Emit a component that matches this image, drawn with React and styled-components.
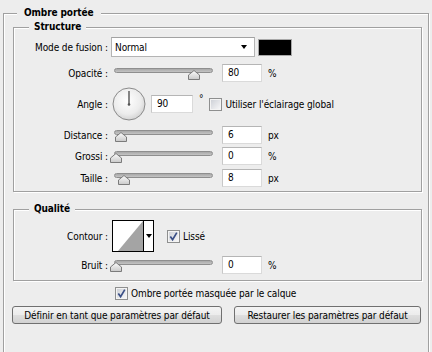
import React from "react";
import styled, { createGlobalStyle } from "styled-components";

const Global = createGlobalStyle`
  html, body {
    margin: 0;
    background: #ededed;
  }
  body {
    font-family: "DejaVu Sans Condensed", "DejaVu Sans", sans-serif;
    font-stretch: condensed;
    font-size: 10px;
    letter-spacing: -0.1px;
    color: #000;
    overflow: hidden;
  }
`;

const Outer = styled.fieldset`
  margin: 6px 3px 0;
  padding: 0 6px 0 9px;
  border: 1px solid #a0a0a0;
  box-shadow: inset 1px 1px 0 #fff, 1px 1px 0 #fff;
  min-height: 370px;
  box-sizing: border-box;
`;

const Legend = styled.legend`
  margin-left: ${(p) => p.$offset}px;
  padding: 0 ${(p) => p.$pad}px;
  height: 14px;
  line-height: 14px;
  font-weight: bold;
  background: #ededed;
`;

const Group = styled.fieldset`
  margin: ${(p) => p.$top || 0}px 0 0;
  padding: ${(p) => p.$padTop}px 0 ${(p) => p.$padBottom}px;
  border: 1px solid #a0a0a0;
  box-shadow: inset 1px 1px 0 #fff, 1px 1px 0 #fff;
`;

const Row = styled.div`
  display: flex;
  align-items: center;
  height: ${(p) => p.$h}px;
  margin-top: ${(p) => p.$mt || 0}px;
`;

const Label = styled.div`
  width: 94px;
  margin-right: 3px;
  text-align: right;
  white-space: nowrap;
`;

const Select = styled.div`
  width: 144px;
  height: 20px;
  box-sizing: border-box;
  border: 1px solid #b4b4b4;
  border-top-color: #a2a2a2;
  background: #fff;
  display: flex;
  align-items: center;
  padding-left: 3px;
`;

const Arrow = styled.span`
  width: 0;
  height: 0;
  border-left: 3px solid transparent;
  border-right: 3px solid transparent;
  border-top: 4px solid #000;
  margin-left: ${(p) => p.$ml || 0}px;
`;

const Swatch = styled.div`
  width: 34px;
  height: 17px;
  margin-left: 3px;
  box-sizing: border-box;
  border: 1px solid #a8a8a8;
  background: #000;
`;

const SliderBox = styled.div`
  position: relative;
  width: 106px;
  height: 20px;
  flex: none;
`;

const Track = styled.div`
  position: absolute;
  left: 3px;
  right: 4px;
  top: 5px;
  height: 5px;
  box-sizing: border-box;
  border: 1px solid #8e8e8e;
  border-radius: 3px;
  background: linear-gradient(#a8a8a8, #c4c4c4);
`;

const Thumb = styled.svg`
  position: absolute;
  top: 7px;
`;

const NumInput = styled.div`
  width: ${(p) => p.$w || 40}px;
  height: 18px;
  margin-left: ${(p) => p.$ml || 5}px;
  box-sizing: border-box;
  border: 1px solid #dadada;
  border-top-color: #b5b5b5;
  border-left-color: #c8c8c8;
  background: #fff;
  padding-left: 5px;
  line-height: 16px;
`;

const Unit = styled.span`
  margin-left: 6px;
`;

const DegreeSign = styled.span`
  margin-left: 6px;
  align-self: flex-start;
  margin-top: 5px;
`;

const CheckLabel = styled.label`
  display: flex;
  align-items: center;
  gap: 3px;
  margin-left: ${(p) => p.$ml || 0}px;
  white-space: nowrap;
`;

const ContourBox = styled.div`
  display: flex;
  width: 42px;
  height: 32px;
  margin-left: 1px;
  box-sizing: border-box;
  border: 1px solid #000;
  background: #fff;
`;

const ContourDrop = styled.div`
  flex: 1;
  display: flex;
  align-items: center;
  justify-content: center;
  border-left: 1px solid #000;
`;

const MaskRow = styled.div`
  margin-top: 6px;
  padding-left: 102px;
  height: 13px;
  display: flex;
  align-items: center;
`;

const Buttons = styled.div`
  display: flex;
  gap: 12px;
  margin: 6px 0 0 -1px;
`;

const Button = styled.button`
  width: ${(p) => p.$w}px;
  height: 18px;
  padding: 0;
  border: 1px solid #707070;
  border-radius: 3px;
  background: linear-gradient(#f4f4f4 0%, #ececec 48%, #dedede 52%, #d2d2d2 100%);
  font: inherit;
  letter-spacing: inherit;
  color: #000;
  white-space: nowrap;
`;

const Check = ({ checked }) => (
  <svg width="13" height="13" viewBox="0 0 13 13">
    <defs>
      <linearGradient id="cbg" x1="0" y1="0" x2="1" y2="1">
        <stop offset="0" stopColor="#cfd2d8" />
        <stop offset="1" stopColor="#f6f6f7" />
      </linearGradient>
    </defs>
    <rect x="0.5" y="0.5" width="12" height="12" fill="#f4f4f4" stroke="#8e8f8f" />
    <rect x="2" y="2" width="9" height="9" fill="url(#cbg)" />
    {checked && (
      <path
        d="M3.3 6.4 L5.6 9.6 L9.8 2.6"
        fill="none"
        stroke="#3a4f86"
        strokeWidth="1.7"
      />
    )}
  </svg>
);

const Slider = ({ at }) => (
  <SliderBox>
    <Track />
    <Thumb width="12" height="10" viewBox="0 0 12 10" style={{ left: at - 6 }}>
      <defs>
        <linearGradient id="thg" x1="0" y1="0" x2="0" y2="1">
          <stop offset="0" stopColor="#fdfdfd" />
          <stop offset="1" stopColor="#c9c9c9" />
        </linearGradient>
      </defs>
      <polygon
        points="0.5,9.5 0.5,5 6,0.5 11.5,5 11.5,9.5"
        fill="url(#thg)"
        stroke="#7b7b7b"
      />
    </Thumb>
  </SliderBox>
);

const Dial = () => (
  <svg width="34" height="34" viewBox="0 0 34 34" style={{ marginLeft: 1 }}>
    <defs>
      <radialGradient id="dg" cx="0.45" cy="0.4" r="0.6">
        <stop offset="0" stopColor="#ffffff" />
        <stop offset="0.7" stopColor="#ececec" />
        <stop offset="1" stopColor="#d4d4d4" />
      </radialGradient>
    </defs>
    <circle cx="17" cy="17" r="16" fill="url(#dg)" stroke="#8a8a8a" />
    <line x1="17" y1="17.5" x2="17" y2="4" stroke="#555" strokeWidth="1.4" />
    <circle cx="17" cy="17.5" r="1.3" fill="#555" />
  </svg>
);

const SliderRow = ({ label, at, value, unit, h = 20, mt }) => (
  <Row $h={h} $mt={mt}>
    <Label>{label}</Label>
    <Slider at={at} />
    <NumInput>{value}</NumInput>
    <Unit>{unit}</Unit>
  </Row>
);

export default function App() {
  return (
    <>
      <Global />
      <Outer>
        <Legend $offset={4} $pad={7}>Ombre portée</Legend>

        <Group $padTop={3} $padBottom={3}>
          <Legend $offset={15} $pad={5}>Structure</Legend>
          <Row $h={20}>
            <Label>Mode de fusion :</Label>
            <Select>
              Normal
              <Arrow $ml={94} />
            </Select>
            <Swatch />
          </Row>
          <SliderRow label="Opacité :" at={83} value="80" unit="%" mt={6} />
          <Row $h={32} $mt={5}>
            <Label>Angle :</Label>
            <Dial />
            <NumInput $w={42}>90</NumInput>
            <DegreeSign>°</DegreeSign>
            <CheckLabel $ml={6}>
              <Check />
              Utiliser l'éclairage global
            </CheckLabel>
          </Row>
          <SliderRow label="Distance :" at={10} value="6" unit="px" mt={5} />
          <SliderRow label="Grossi :" at={5} value="0" unit="%" mt={1} />
          <SliderRow label="Taille :" at={13} value="8" unit="px" mt={2} />
        </Group>

        <Group $top={10} $padTop={4} $padBottom={5}>
          <Legend $offset={15} $pad={5}>Qualité</Legend>
          <Row $h={32}>
            <Label>Contour :</Label>
            <ContourBox>
              <svg width="30" height="30" viewBox="0 0 30 30">
                <rect width="30" height="30" fill="#fff" />
                <polygon points="5,30 30,0 30,30" fill="#a4a4a4" />
              </svg>
              <ContourDrop>
                <Arrow />
              </ContourDrop>
            </ContourBox>
            <CheckLabel $ml={13}>
              <Check checked />
              Lissé
            </CheckLabel>
          </Row>
          <SliderRow label="Bruit :" at={5} value="0" unit="%" mt={3} />
        </Group>

        <MaskRow>
          <CheckLabel>
            <Check checked />
            Ombre portée masquée par le calque
          </CheckLabel>
        </MaskRow>

        <Buttons>
          <Button $w={210}>Définir en tant que paramètres par défaut</Button>
          <Button $w={187}>Restaurer les paramètres par défaut</Button>
        </Buttons>
      </Outer>
    </>
  );
}
